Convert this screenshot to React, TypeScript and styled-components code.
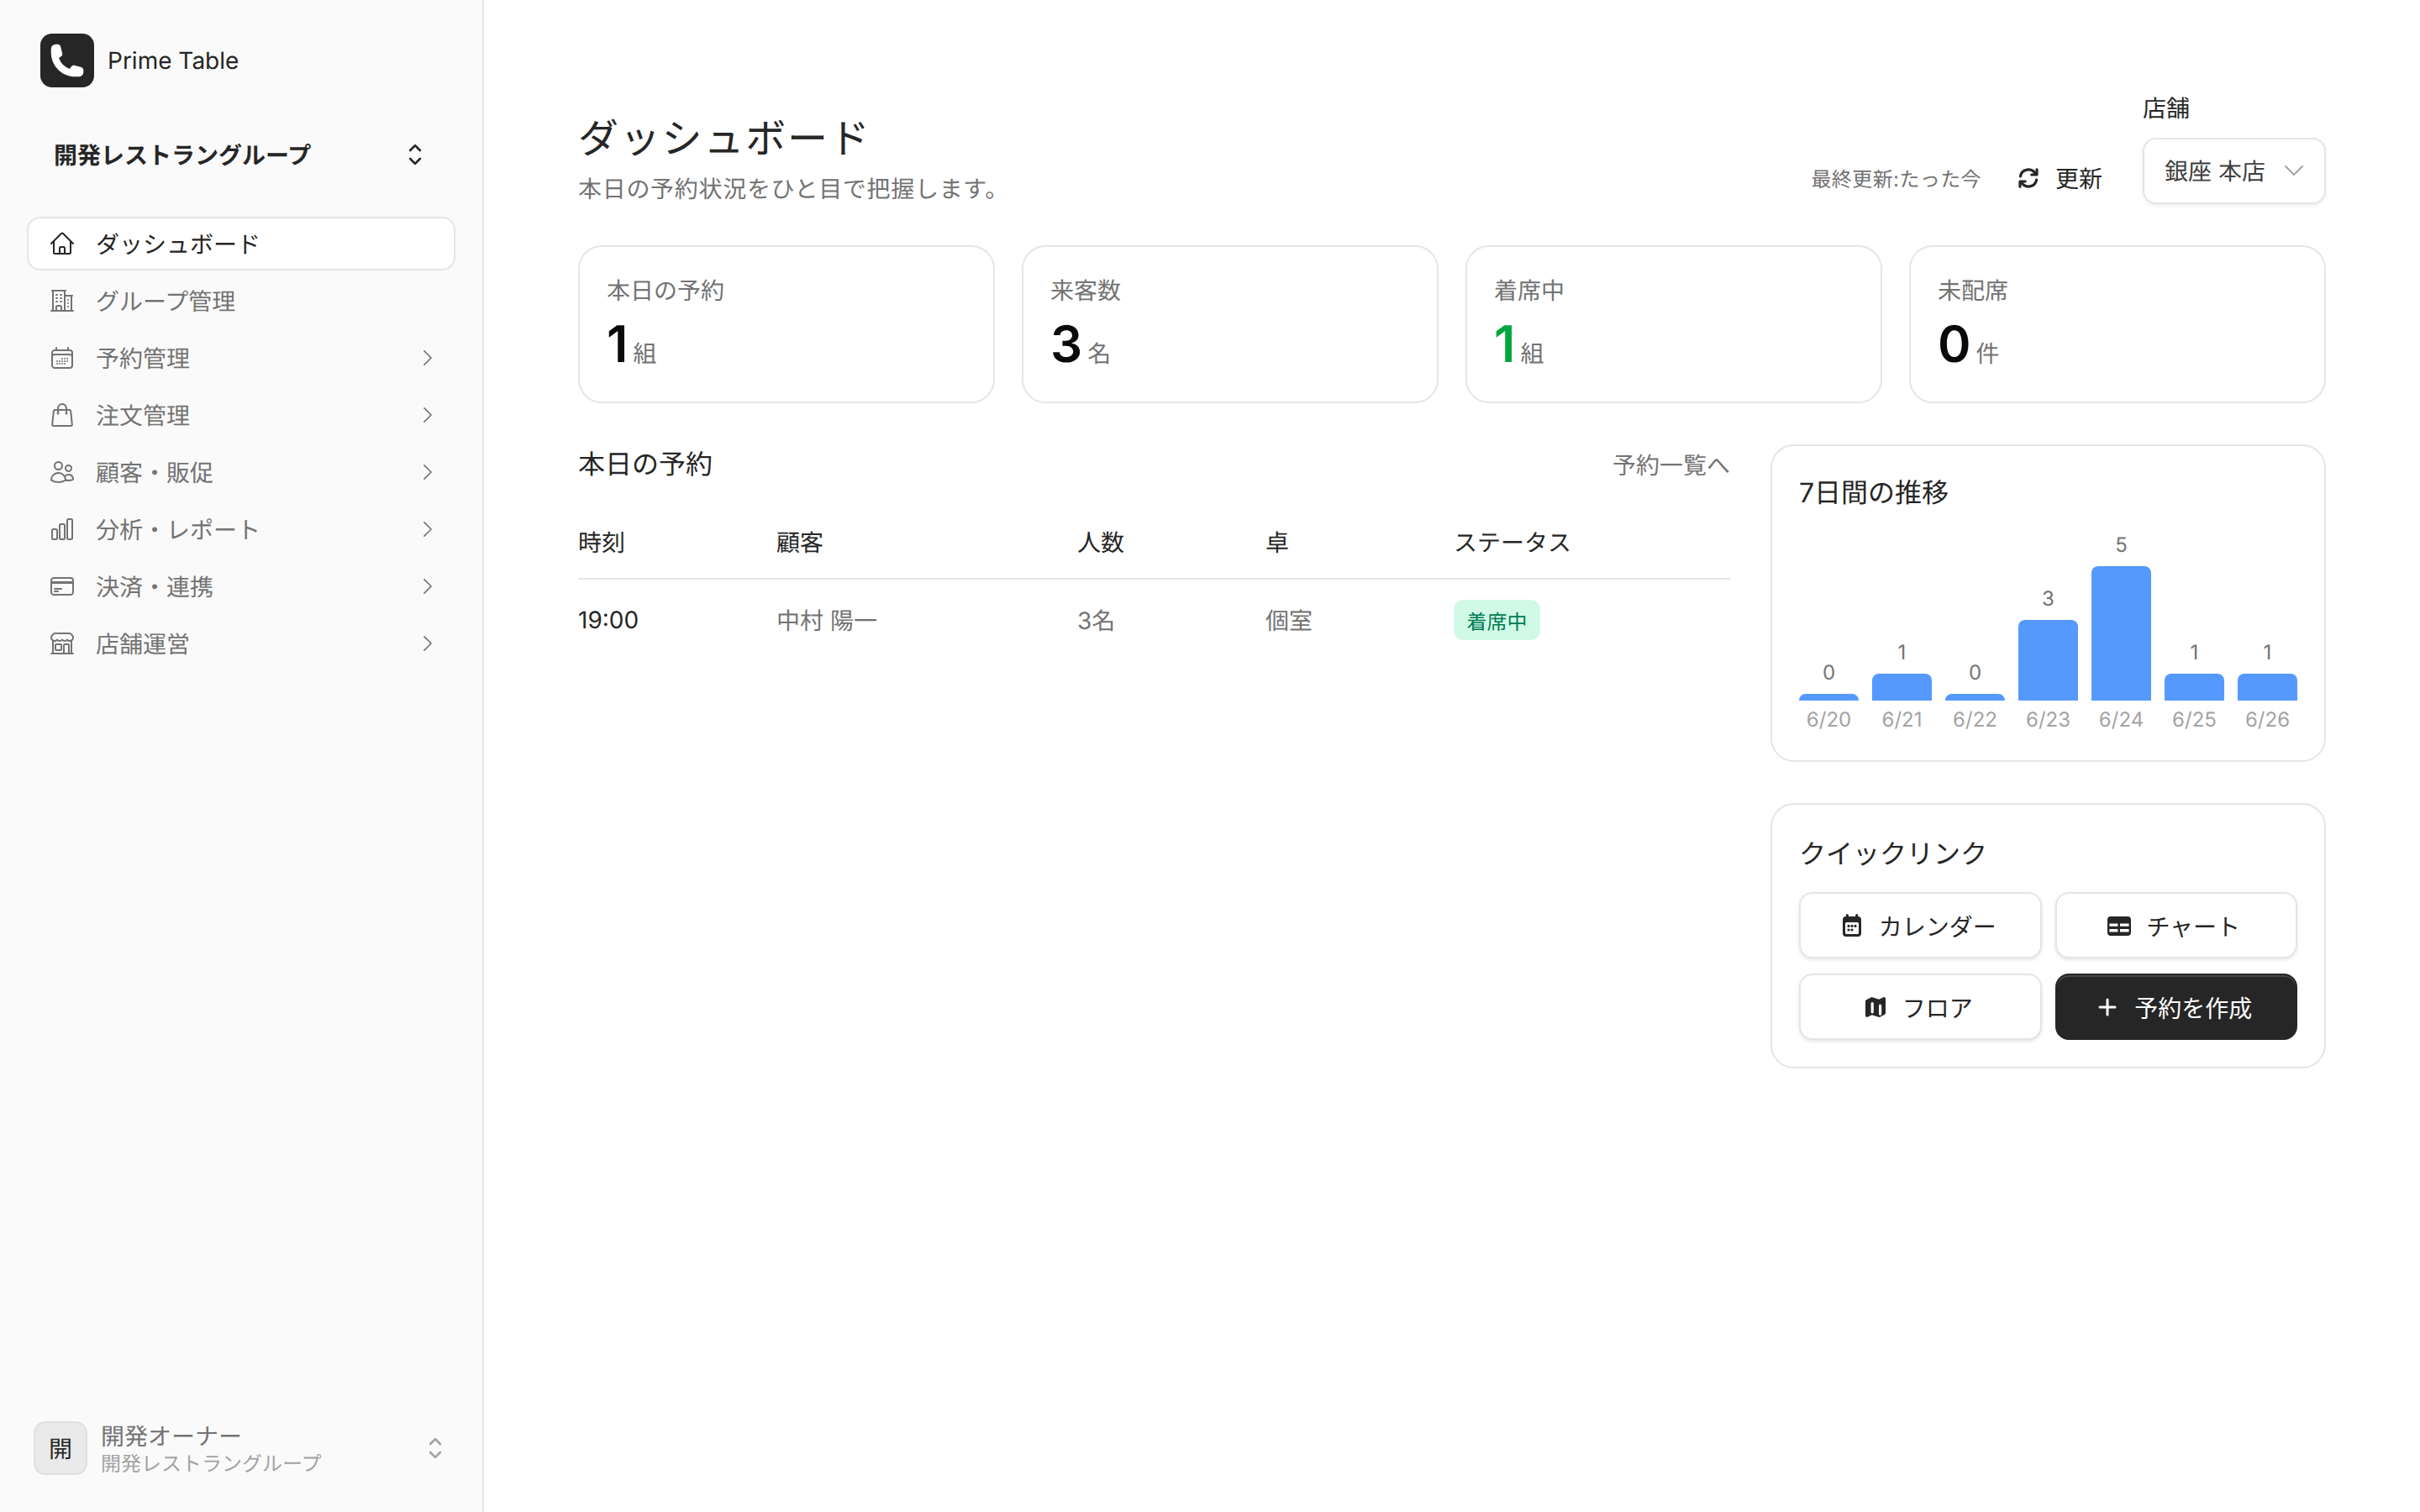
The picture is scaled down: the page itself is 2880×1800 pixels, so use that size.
import React from 'react';
import styled, { createGlobalStyle } from 'styled-components';
import {
  HiPhone,
  HiMiniChevronUpDown,
  HiOutlineHome,
  HiOutlineBuildingOffice2,
  HiOutlineCalendarDays,
  HiOutlineShoppingBag,
  HiOutlineUsers,
  HiOutlineChartBar,
  HiOutlineCreditCard,
  HiOutlineBuildingStorefront,
  HiOutlineChevronRight,
  HiOutlineChevronDown,
} from 'react-icons/hi2';
import type { IconType } from 'react-icons';

const GlobalStyle = createGlobalStyle`
  * { box-sizing: border-box; }
  html, body { margin: 0; padding: 0; background: #fff; }
  body {
    font-family: Inter, "Noto Sans CJK JP", sans-serif;
    color: #171717;
    text-rendering: geometricPrecision;
  }
`;

const navItems: { label: string; icon: IconType; active?: boolean; arrow?: boolean }[] = [
  { label: 'ダッシュボード', icon: HiOutlineHome, active: true },
  { label: 'グループ管理', icon: HiOutlineBuildingOffice2 },
  { label: '予約管理', icon: HiOutlineCalendarDays, arrow: true },
  { label: '注文管理', icon: HiOutlineShoppingBag, arrow: true },
  { label: '顧客・販促', icon: HiOutlineUsers, arrow: true },
  { label: '分析・レポート', icon: HiOutlineChartBar, arrow: true },
  { label: '決済・連携', icon: HiOutlineCreditCard, arrow: true },
  { label: '店舗運営', icon: HiOutlineBuildingStorefront, arrow: true },
];

const stats = [
  { label: '本日の予約', value: '1', unit: '組' },
  { label: '来客数', value: '3', unit: '名' },
  { label: '着席中', value: '1', unit: '組', green: true },
  { label: '未配席', value: '0', unit: '件' },
];

const trend = [
  { date: '6/20', count: 0 },
  { date: '6/21', count: 1 },
  { date: '6/22', count: 0 },
  { date: '6/23', count: 3 },
  { date: '6/24', count: 5 },
  { date: '6/25', count: 1 },
  { date: '6/26', count: 1 },
];

// small solid icons, drawn on a 16 unit grid
const RefreshIcon = () => (
  <svg width="32" height="32" viewBox="0 0 16 16" fill="none" stroke="currentColor" strokeWidth="1.6" strokeLinecap="round" strokeLinejoin="round">
    <path d="M3.2 7a4.8 4.8 0 0 1 9-1.4" />
    <path d="M13 2.9V6H9.9" />
    <path d="M12.8 9a4.8 4.8 0 0 1-9 1.4" />
    <path d="M3 13.1V10h3.1" />
  </svg>
);

const CalendarIcon = () => (
  <svg width="32" height="32" viewBox="0 0 16 16" fill="currentColor">
    <rect x="4.4" y="1" width="1.5" height="3" rx="0.75" />
    <rect x="10.1" y="1" width="1.5" height="3" rx="0.75" />
    <path
      fillRule="evenodd"
      d="M4.5 2.5h7a2 2 0 0 1 2 2v8a2 2 0 0 1-2 2h-7a2 2 0 0 1-2-2v-8a2 2 0 0 1 2-2ZM4.75 6a.75.75 0 0 0-.75.75v5.5c0 .41.34.75.75.75h6.5a.75.75 0 0 0 .75-.75v-5.5a.75.75 0 0 0-.75-.75h-6.5Z"
    />
    <circle cx="6" cy="8.2" r="0.8" />
    <circle cx="8" cy="8.2" r="0.8" />
    <circle cx="10" cy="8.2" r="0.8" />
    <circle cx="6" cy="10.5" r="0.8" />
    <circle cx="8" cy="10.5" r="0.8" />
  </svg>
);

const TableIcon = () => (
  <svg width="32" height="32" viewBox="0 0 16 16" fill="currentColor">
    <path
      fillRule="evenodd"
      d="M3 2.5h10a2 2 0 0 1 2 2V12a2 2 0 0 1-2 2H3a2 2 0 0 1-2-2V4.5a2 2 0 0 1 2-2ZM2.2 6.7v1.7h5V6.7h-5Zm6.3 0v1.7h5.3V6.7H8.500ZM2.2 10v1.7h5V10h-5Zm6.3 0v1.7h5.3V10H8.500Z"
    />
  </svg>
);

const MapIcon = () => (
  <svg width="32" height="32" viewBox="0 0 16 16" fill="currentColor">
    <path
      fillRule="evenodd"
      d="M5.5 2.1a1 1 0 0 1 .6 0l4 1.3 2.4-1.2c.7-.4 1.500.1 1.500.9v8.400c0 .4-.2.7-.5.9l-2.900 1.500a1 1 0 0 1-.7 0l-4-1.300-2.400 1.200c-.7.4-1.500-.1-1.500-.9V4.500c0-.4.2-.7.5-.9l3-1.500ZM6.100 5a.8.8 0 0 0-.8.8v5.100a.8.8 0 0 0 1.600 0V5.800A.8.8 0 0 0 6.100 5Zm4.700 1.300a.8.8 0 0 0-.8.8v5a.8.8 0 0 0 1.600 0v-5a.8.8 0 0 0-.8-.8Z"
    />
  </svg>
);

const PlusIcon = () => (
  <svg width="32" height="32" viewBox="0 0 16 16" fill="none" stroke="currentColor" strokeWidth="1.5" strokeLinecap="round">
    <path d="M8 3.5v9M3.5 8h9" />
  </svg>
);

const Page = styled.div`
  display: flex;
  width: 2880px;
  height: 1800px;
  overflow: hidden;
`;

const Sidebar = styled.aside`
  display: flex;
  flex-direction: column;
  width: 576px;
  flex-shrink: 0;
  height: 100%;
  padding: 40px 32px 41px;
  background: #fafafa;
  border-right: 2px solid #e5e5e5;
`;

const Brand = styled.div`
  display: flex;
  align-items: center;
  gap: 16px;
  padding-left: 16px;
  font-size: 28px;
  line-height: 40px;
  color: #262626;
`;

const BrandMark = styled.div`
  display: flex;
  align-items: center;
  justify-content: center;
  width: 64px;
  height: 64px;
  border-radius: 14px;
  background: #262626;
  color: #fff;
  font-size: 44px;
`;

const GroupSwitch = styled.div`
  display: flex;
  align-items: center;
  justify-content: space-between;
  height: 64px;
  margin-top: 48px;
  padding: 0 30px 0 32px;
  font-size: 28px;
  font-weight: 700;
  color: #262626;
  svg { font-size: 36px; }
`;

const Nav = styled.nav`
  display: flex;
  flex-direction: column;
  gap: 4px;
  margin-top: 42px;
`;

const NavItem = styled.div<{ $active?: boolean }>`
  display: flex;
  align-items: center;
  gap: 26px;
  height: 64px;
  padding: 0 18px 0 26px;
  border: 2px solid ${(p) => (p.$active ? '#e5e5e5' : 'transparent')};
  border-radius: 16px;
  background: ${(p) => (p.$active ? '#fff' : 'transparent')};
  color: ${(p) => (p.$active ? '#262626' : '#737373')};
  font-size: 28px;
  > svg:first-child { font-size: 32px; margin: 0 -2px; flex-shrink: 0; }
`;

const NavLabel = styled.span`
  flex: 1;
`;

const NavArrow = styled(HiOutlineChevronRight)`
  font-size: 26px;
`;

const UserRow = styled.div`
  display: flex;
  align-items: center;
  gap: 16px;
  margin-top: auto;
  padding: 0 6px 0 8px;
`;

const Avatar = styled.div`
  display: flex;
  align-items: center;
  justify-content: center;
  width: 64px;
  height: 64px;
  border: 2px solid #e0e0e0;
  border-radius: 14px;
  background: #e9e9e9;
  color: #262626;
  font-size: 28px;
`;

const UserText = styled.div`
  flex: 1;
  display: flex;
  flex-direction: column;
  padding-top: 4px;
`;

const UserName = styled.span`
  font-size: 28px;
  line-height: 34px;
  color: #737373;
`;

const UserGroup = styled.span`
  font-size: 24px;
  line-height: 32px;
  color: #a3a3a3;
`;

const UserChevron = styled(HiMiniChevronUpDown)`
  font-size: 36px;
  color: #a3a3a3;
`;

const Main = styled.main`
  flex: 1;
  padding: 109px 112px 0;
  background: #fff;
`;

const Header = styled.header`
  display: flex;
  align-items: flex-end;
  justify-content: space-between;
  margin-bottom: 49px;
`;

const Title = styled.h1`
  margin: 0;
  font-size: 48px;
  line-height: 64px;
  font-weight: 400;
  letter-spacing: 1.8px;
  color: #262626;
`;

const Subtitle = styled.p`
  margin: 8px 0 -2px;
  font-size: 28px;
  line-height: 40px;
  letter-spacing: 0.7px;
  color: #737373;
`;

const HeaderActions = styled.div`
  display: flex;
  align-items: flex-end;
  gap: 48px;
`;

const UpdateGroup = styled.div`
  display: flex;
  align-items: center;
  gap: 40px;
  height: 54px;
  margin-bottom: 4px;
`;

const Updated = styled.span`
  margin-bottom: 2px;
  font-size: 24px;
  letter-spacing: 0.4px;
  color: #737373;
`;

const RefreshButton = styled.div`
  display: flex;
  align-items: center;
  gap: 16px;
  font-size: 28px;
  color: #262626;
`;

const StoreField = styled.div`
  display: flex;
  flex-direction: column;
  gap: 15px;
  width: 218px;
`;

const StoreLabel = styled.label`
  font-size: 28px;
  line-height: 40px;
  color: #262626;
`;

const StoreSelect = styled.div`
  display: flex;
  align-items: center;
  justify-content: space-between;
  height: 79px;
  padding: 0 20px 1px 24px;
  border: 2px solid #e5e5e5;
  border-radius: 16px;
  box-shadow: 0 2px 4px rgba(0, 0, 0, 0.08);
  font-size: 28px;
  color: #404040;
  svg { font-size: 32px; color: #a3a3a3; }
`;

const StatGrid = styled.section`
  display: grid;
  grid-template-columns: repeat(4, 1fr);
  gap: 32px;
  margin-bottom: 49px;
`;

const Card = styled.div`
  border: 2px solid #e5e5e5;
  border-radius: 28px;
  background: #fff;
  padding: 32px;
`;

const StatLabel = styled.div`
  font-size: 28px;
  line-height: 40px;
  color: #737373;
`;

const StatValue = styled.div`
  display: flex;
  align-items: baseline;
  gap: 6px;
  height: 72px;
  margin-top: 8px;
  line-height: 72px;
`;

const StatNumber = styled.span<{ $green?: boolean }>`
  font-size: 60px;
  font-weight: 600;
  color: ${(p) => (p.$green ? '#00a63e' : '#0a0a0a')};
`;

const StatUnit = styled.span`
  font-size: 28px;
  color: #737373;
`;

const Columns = styled.div`
  display: grid;
  grid-template-columns: 1fr 661px;
  gap: 48px;
  align-items: start;
`;

const SectionHead = styled.div`
  display: flex;
  align-items: center;
  justify-content: space-between;
  height: 48px;
  margin-bottom: 24px;
`;

const SectionTitle = styled.h2`
  margin: 0;
  font-size: 32px;
  line-height: 48px;
  font-weight: 400;
  color: #262626;
`;

const LinksTitle = styled(SectionTitle)`
  padding-top: 3px;
`;

const SectionLink = styled.a`
  font-size: 28px;
  color: #737373;
`;

const Row = styled.div<{ $head?: boolean }>`
  display: grid;
  grid-template-columns: 236px 358px 224px 224px 1fr;
  align-items: center;
  height: ${(p) => (p.$head ? '89px' : '96px')};
  border-bottom: ${(p) => (p.$head ? '2px solid #e5e5e5' : 'none')};
  font-size: 28px;
  color: ${(p) => (p.$head ? '#262626' : '#737373')};
`;

const TimeCell = styled.span`
  color: #262626;
`;

const Badge = styled.span`
  display: inline-flex;
  align-items: center;
  justify-content: center;
  width: 103px;
  height: 48px;
  border-radius: 12px;
  background: #d0fae5;
  color: #007a55;
  font-size: 24px;
`;

const SideColumn = styled.div`
  display: flex;
  flex-direction: column;
  gap: 49px;
`;

const Chart = styled.div`
  display: flex;
  align-items: flex-end;
  gap: 16px;
  height: 246px;
  margin-top: 16px;
`;

const ChartColumn = styled.div`
  flex: 1;
  display: flex;
  flex-direction: column;
  align-items: stretch;
  text-align: center;
`;

const BarValue = styled.span`
  font-size: 24px;
  line-height: 32px;
  margin-bottom: 9px;
  color: #737373;
`;

const Bar = styled.div`
  border-radius: 8px 8px 0 0;
  background: #5599ff;
`;

const BarDate = styled.span`
  font-size: 24px;
  line-height: 32px;
  margin-top: 7px;
  color: #a3a3a3;
`;

const LinkGrid = styled.div`
  display: grid;
  grid-template-columns: 1fr 1fr;
  gap: 18px 16px;
  margin-top: 21px;
`;

const LinkButton = styled.button<{ $primary?: boolean }>`
  display: flex;
  align-items: center;
  justify-content: center;
  gap: 16px;
  height: 79px;
  padding: 0 7px 0 0;
  border: 2px solid ${(p) => (p.$primary ? '#262626' : '#e5e5e5')};
  border-radius: 16px;
  background: ${(p) => (p.$primary ? '#262626' : '#fff')};
  box-shadow: ${(p) =>
    p.$primary
      ? 'inset 0 2px 0 rgba(255, 255, 255, 0.15)'
      : '0 2px 4px rgba(0, 0, 0, 0.1)'};
  color: ${(p) => (p.$primary ? '#fff' : '#262626')};
  font: inherit;
  font-size: 28px;
`;

const App = () => (
  <Page>
    <GlobalStyle />
    <Sidebar>
      <Brand>
        <BrandMark>
          <HiPhone />
        </BrandMark>
        Prime Table
      </Brand>
      <GroupSwitch>
        開発レストラングループ
        <HiMiniChevronUpDown />
      </GroupSwitch>
      <Nav>
        {navItems.map((item) => (
          <NavItem key={item.label} $active={item.active}>
            <item.icon />
            <NavLabel>{item.label}</NavLabel>
            {item.arrow && <NavArrow />}
          </NavItem>
        ))}
      </Nav>
      <UserRow>
        <Avatar>開</Avatar>
        <UserText>
          <UserName>開発オーナー</UserName>
          <UserGroup>開発レストラングループ</UserGroup>
        </UserText>
        <UserChevron />
      </UserRow>
    </Sidebar>
    <Main>
      <Header>
        <div>
          <Title>ダッシュボード</Title>
          <Subtitle>本日の予約状況をひと目で把握します。</Subtitle>
        </div>
        <HeaderActions>
          <UpdateGroup>
            <Updated>最終更新:たった今</Updated>
            <RefreshButton>
              <RefreshIcon />
              更新
            </RefreshButton>
          </UpdateGroup>
          <StoreField>
            <StoreLabel>店舗</StoreLabel>
            <StoreSelect>
              銀座 本店
              <HiOutlineChevronDown />
            </StoreSelect>
          </StoreField>
        </HeaderActions>
      </Header>
      <StatGrid>
        {stats.map((s) => (
          <Card key={s.label}>
            <StatLabel>{s.label}</StatLabel>
            <StatValue>
              <StatNumber $green={s.green}>{s.value}</StatNumber>
              <StatUnit>{s.unit}</StatUnit>
            </StatValue>
          </Card>
        ))}
      </StatGrid>
      <Columns>
        <section>
          <SectionHead>
            <SectionTitle>本日の予約</SectionTitle>
            <SectionLink>予約一覧へ</SectionLink>
          </SectionHead>
          <Row $head>
            <span>時刻</span>
            <span>顧客</span>
            <span>人数</span>
            <span>卓</span>
            <span>ステータス</span>
          </Row>
          <Row>
            <TimeCell>19:00</TimeCell>
            <span>中村 陽一</span>
            <span>3名</span>
            <span>個室</span>
            <span>
              <Badge>着席中</Badge>
            </span>
          </Row>
        </section>
        <SideColumn>
          <Card>
            <SectionTitle>7日間の推移</SectionTitle>
            <Chart>
              {trend.map((d) => (
                <ChartColumn key={d.date}>
                  <BarValue>{d.count}</BarValue>
                  <Bar style={{ height: d.count ? d.count * 32 : 8 }} />
                  <BarDate>{d.date}</BarDate>
                </ChartColumn>
              ))}
            </Chart>
          </Card>
          <Card>
            <LinksTitle>クイックリンク</LinksTitle>
            <LinkGrid>
              <LinkButton>
                <CalendarIcon />
                カレンダー
              </LinkButton>
              <LinkButton>
                <TableIcon />
                チャート
              </LinkButton>
              <LinkButton>
                <MapIcon />
                フロア
              </LinkButton>
              <LinkButton $primary>
                <PlusIcon />
                予約を作成
              </LinkButton>
            </LinkGrid>
          </Card>
        </SideColumn>
      </Columns>
    </Main>
  </Page>
);

export default App;
